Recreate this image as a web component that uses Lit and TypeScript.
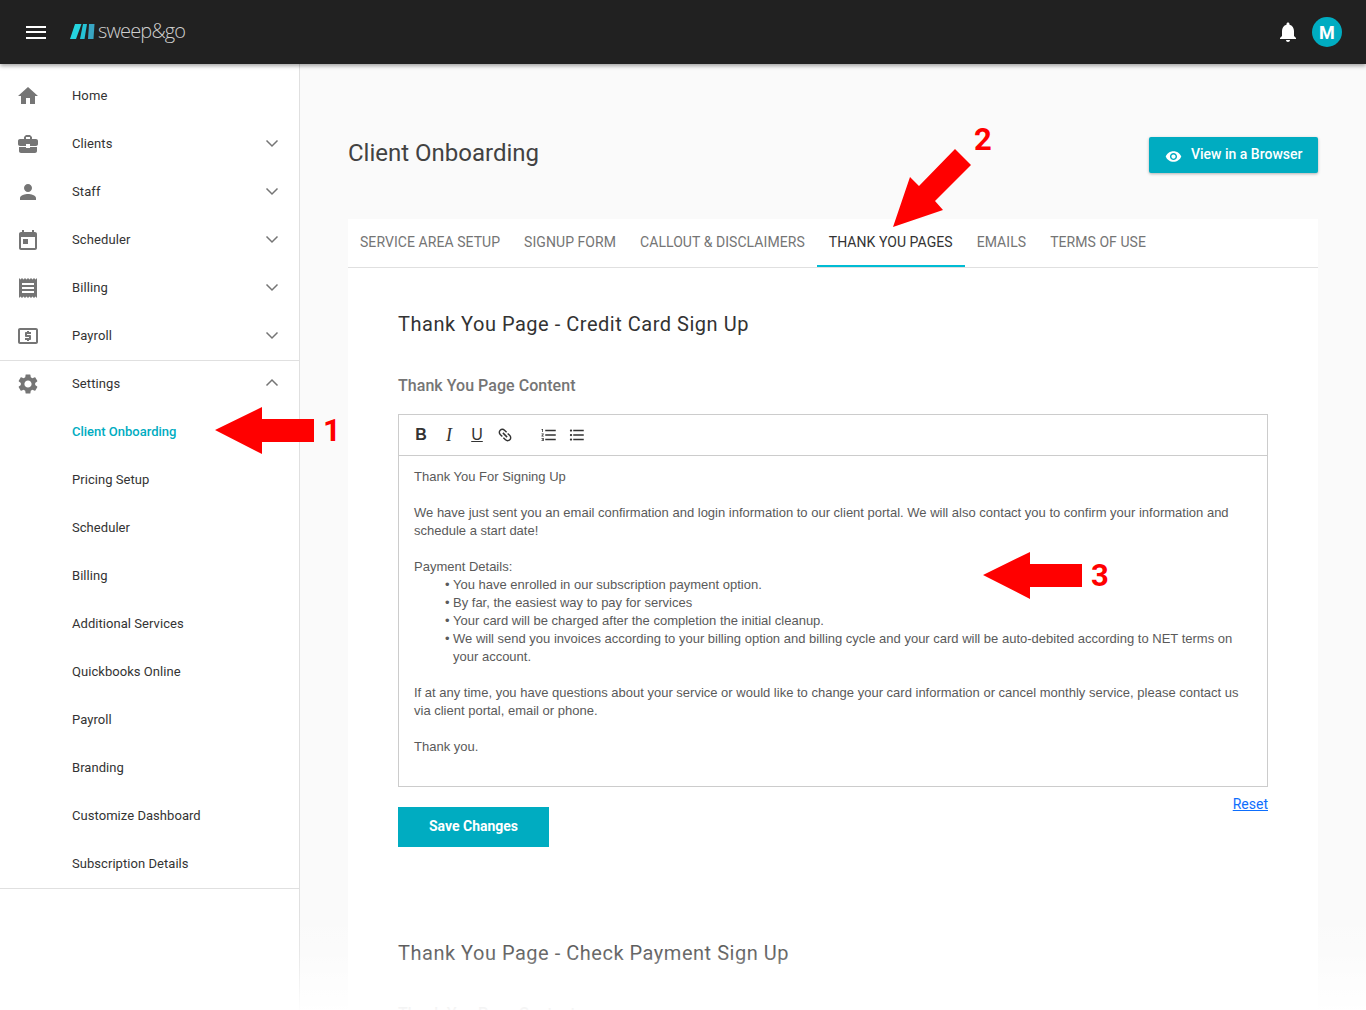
import { LitElement, html, css, svg } from "lit";
import { customElement } from "lit/decorators.js";

const ICONS: Record<string, any> = {
  home: svg`<path d="M10 20v-6h4v6h5v-8h3L12 3 2 12h3v8z"/>`,
  clients: svg`<path d="M10 16v-1H3.01L3 19c0 1.11.89 2 2 2h14c1.11 0 2-.89 2-2v-4h-7v1h-4zm10-9h-4.01V5l-2-2h-4l-2 2v2H4c-1.1 0-2 .9-2 2v3c0 1.11.89 2 2 2h6v-2h4v2h6c1.1 0 2-.9 2-2V9c0-1.1-.9-2-2-2zm-6 0h-4V5h4v2z"/>`,
  staff: svg`<path d="M12 12c2.21 0 4-1.79 4-4s-1.79-4-4-4-4 1.79-4 4 1.79 4 4 4zm0 2c-2.67 0-8 1.34-8 4v2h16v-2c0-2.66-5.33-4-8-4z"/>`,
  scheduler: svg`<path d="M19 4h-1V2h-2v2H8V2H6v2H5c-1.11 0-2 .9-2 2v14c0 1.1.89 2 2 2h14c1.1 0 2-.9 2-2V6c0-1.1-.9-2-2-2zm0 16H5V9h14v11zM7 11h5v5H7z"/>`,
  billing: svg`<path d="M18 17H6v-2h12v2zm0-4H6v-2h12v2zm0-4H6V7h12v2zM3 22l1.5-1.5L6 22l1.5-1.5L9 22l1.5-1.5L12 22l1.5-1.5L15 22l1.5-1.5L18 22l1.5-1.5L21 22V2l-1.5 1.5L18 2l-1.5 1.5L15 2l-1.5 1.5L12 2l-1.5 1.5L9 2 7.5 3.5 6 2 4.500 3.500 3 2v20z"/>`,
  payroll: svg`<path d="M20 4H4c-1.110 0-2 .89-2 2v12c0 1.110.89 2 2 2h16c1.110 0 2-.89 2-2V6c0-1.110-.89-2-2-2zm0 14H4V6h16v12zM11 17h2v-1h1c.55 0 1-.45 1-1v-3c0-.55-.45-1-1-1h-3v-1h4V8h-2V7h-2v1h-1c-.55 0-1 .45-1 1v3c0 .55.45 1 1 1h3v1H9v2h2v1z"/>`,
  settings: svg`<path d="M19.14 12.94c.04-.3.06-.61.06-.94 0-.32-.02-.64-.07-.94l2.030-1.580a.49.49 0 0 0 .12-.61l-1.920-3.320a.488.488 0 0 0-.59-.22l-2.390.96c-.5-.38-1.030-.7-1.620-.94l-.36-2.540a.484.484 0 0 0-.48-.41h-3.840c-.24 0-.43.17-.47.41l-.36 2.540c-.59.24-1.130.57-1.620.94l-2.390-.96c-.22-.08-.47 0-.59.22L2.740 8.870c-.12.21-.08.47.12.61l2.030 1.580c-.05.3-.09.63-.09.94s.02.64.07.94l-2.030 1.580a.49.49 0 0 0-.12.61l1.920 3.320c.12.22.37.29.59.22l2.390-.96c.5.38 1.030.7 1.620.94l.36 2.540c.05.24.24.41.48.41h3.840c.24 0 .44-.17.47-.41l.36-2.540c.59-.24 1.130-.56 1.620-.94l2.390.96c.22.08.47 0 .59-.22l1.920-3.320c.12-.22.07-.47-.12-.61l-2.010-1.580zM12 15.600c-1.980 0-3.600-1.620-3.600-3.600s1.620-3.600 3.600-3.600 3.600 1.620 3.600 3.600-1.620 3.600-3.600 3.600z"/>`,
};

const NAV = [
  { k: "home", t: "Home" },
  { k: "clients", t: "Clients", c: "down" },
  { k: "staff", t: "Staff", c: "down" },
  { k: "scheduler", t: "Scheduler", c: "down" },
  { k: "billing", t: "Billing", c: "down" },
  { k: "payroll", t: "Payroll", c: "down" },
];
const SUB = ["Client Onboarding", "Pricing Setup", "Scheduler", "Billing", "Additional Services", "Quickbooks Online", "Payroll", "Branding", "Customize Dashboard", "Subscription Details"];
const TABS = ["Service Area Setup", "Signup Form", "Callout & Disclaimers", "Thank You Pages", "Emails", "Terms of Use"];

@customElement("app-root")
export class AppRoot extends LitElement {
  static styles = css`
    :host { display: block; position: relative; width: 1366px; height: 1010px; overflow: hidden; background: #fafafa; font-family: Roboto, sans-serif; color: #212121; }
    .top { height: 64px; background: #212121; box-shadow: 0 2px 4px rgba(0,0,0,.35); position: relative; z-index: 2; display: flex; align-items: center; padding: 0 24px 0 26px; }
    .burger { width: 20px; height: 13px; display: flex; flex-direction: column; justify-content: space-between; margin-right: 24px; }
    .burger i { display: block; height: 2px; background: #fff; }
    .logo { display: flex; align-items: center; margin-top: -2px; }
    .logotext { font-family: "Open Sans", sans-serif; font-weight: 300; font-size: 20px; letter-spacing: -0.85px; color: #cfcfcf; margin-left: 3px; margin-top: -2px; }
    .spacer { flex: 1; }
    .bell { width: 24px; height: 24px; fill: #fff; margin-right: 12px; margin-top: -1px; }
    .avatar { width: 30px; height: 30px; border-radius: 50%; background: #00acc1; color: #fff; font-weight: 700; font-size: 18px; display: flex; align-items: center; justify-content: center; }
    .body { display: flex; height: 946px; }
    .side { width: 299px; flex: none; background: #fff; border-right: 1px solid #e0e0e0; padding-top: 8px; box-sizing: content-box; }
    .item { height: 48px; display: flex; align-items: center; font-size: 13px; color: #333; padding-left: 16px; padding-right: 15px; letter-spacing: .1px; }
    .item svg.ic { width: 24px; height: 24px; fill: #757575; margin-right: 32px; flex: none; }
    .item .lbl { flex: 1; padding-bottom: 2px; }
    .chev { width: 24px; height: 24px; fill: none; stroke: #757575; stroke-width: 1.5; flex: none; margin-top: -2px; }
    .div { border-top: 1px solid #e0e0e0; height: 0; }
    .settings { margin-top: -1px; }
    .sub { height: 48px; display: flex; align-items: center; padding-left: 72px; padding-bottom: 2px; box-sizing: border-box; font-size: 13px; letter-spacing: .05px; color: #333; }
    .sub.on { color: #00acc1; font-weight: 500; letter-spacing: 0; }
    .main { flex: 1; padding: 0 48px; min-width: 0; }
    .head { height: 155px; display: flex; align-items: flex-start; justify-content: space-between; }
    h1 { margin: 71px 0 0; font-weight: 400; font-size: 24px; line-height: 36px; color: #424242; letter-spacing: 0; }
    .view { margin-top: 73px; width: 169px; height: 36px; box-sizing: border-box; background: #00acc1; color: #fff; border-radius: 2px; box-shadow: 0 1px 3px rgba(0,0,0,.3); display: flex; align-items: center; padding-left: 17px; padding-bottom: 2px; font-size: 14px; font-weight: 500; gap: 9px; }
    .view svg { width: 17px; height: 17px; fill: #fff; margin-top: 4px; margin-left: -1px; }
    .card { background: #fff; height: 791px; }
    .tabs { display: flex; height: 48px; border-bottom: 1px solid #e0e0e0; }
    .tab { padding: 0 12px 2px; height: 48px; display: flex; align-items: center; font-size: 14px; text-transform: uppercase; color: #757575; box-sizing: border-box; letter-spacing: .06px; }
    .tab.on { color: #333; border-bottom: 2px solid #00bcd4; padding-bottom: 0; }
    .content { padding: 0 50px; }
    h2 { margin: 0; font-weight: 400; font-size: 20px; letter-spacing: .52px; line-height: 28px; color: #333; padding-top: 42px; }
    h3 { margin: 0; font-weight: 500; font-size: 16px; line-height: 24px; color: #757575; padding-top: 36px; padding-bottom: 16px; letter-spacing: .04px; }
    .editor { border: 1px solid #ccc; height: 373px; box-sizing: border-box; }
    .tools { height: 40px; border-bottom: 1px solid #ccc; display: flex; align-items: center; padding-left: 13px; }
    .tools .t { width: 18px; height: 18px; margin-right: 10px; display: flex; align-items: center; justify-content: center; font-size: 16px; font-family: "Liberation Sans", sans-serif; color: #333; }
    .tools svg { width: 18px; height: 18px; fill: #333; }
    .txt { padding: 12px 15px 0; font-family: "Liberation Sans", Arial, sans-serif; font-size: 13px; line-height: 18px; color: #5a5a5a; font-weight: 400; }
    .txt p { margin: 0 0 18px; }
    .txt ul { margin: 0; padding: 0 0 0 39px; list-style: none; }
    .txt li { position: relative; }
    .txt li::before { content: "•"; position: absolute; left: -8px; }
    .actions { display: flex; justify-content: space-between; align-items: flex-start; padding-top: 8px; }
    .reset { color: #0d6efd; text-decoration: underline; font-size: 14px; line-height: 18px; }
    .save { margin-top: 12px; width: 151px; height: 40px; padding-bottom: 2px; box-sizing: border-box; background: #00acc1; color: #fff; font-weight: 700; font-size: 14px; letter-spacing: 0; display: flex; align-items: center; justify-content: center; }
    .h2b { padding-top: 92px; }
    .h3b { padding-top: 35px; }
    .fade { position: absolute; left: 0; right: 0; bottom: 0; height: 100px; background: linear-gradient(to bottom, rgba(255,255,255,0) 0%, rgba(255,255,255,.25) 43%, rgba(255,255,255,.95) 100%); z-index: 3; pointer-events: none; }
    .ann { position: absolute; color: #f00; font-family: Roboto, sans-serif; font-weight: 700; font-size: 31px; line-height: 36px; z-index: 4; }
    .arrow { position: absolute; left: 0; top: 0; z-index: 4; pointer-events: none; }
  `;

  private chev(d: string) {
    return html`<svg class="chev" viewBox="0 0 24 24"><path d="${d === "down" ? "M6.500 9.500 12 15l5.500-5.500" : "M6.500 14.500 12 9l5.500 5.500"}"/></svg>`;
  }

  render() {
    return html`
      <div class="top">
        <div class="burger"><i></i><i></i><i></i></div>
        <div class="logo">
          <svg width="25" height="17" viewBox="0 0 25 17">
            <path d="M5 1h6.500L6 16H0z" fill="#25d4de"/>
            <path d="M13 1h4l-2.500 15H10z" fill="#25c3d6"/>
            <path d="M19 1h5.500l-1 15H18z" fill="#38a6c4"/>
          </svg>
          <span class="logotext">sweep&amp;go</span>
        </div>
        <div class="spacer"></div>
        <svg class="bell" viewBox="0 0 24 24"><path d="M12 22c1.100 0 2-.9 2-2h-4c0 1.100.9 2 2 2zm6-6v-5c0-3.070-1.630-5.640-4.500-6.320V4c0-.83-.67-1.500-1.500-1.500s-1.500.67-1.500 1.500v.68C7.640 5.360 6 7.920 6 11v5l-2 2v1h16v-1l-2-2z"/></svg>
        <div class="avatar">M</div>
      </div>
      <div class="body">
        <nav class="side">
          ${NAV.map((n) => html`<div class="item"><svg class="ic" viewBox="0 0 24 24">${ICONS[n.k]}</svg><span class="lbl">${n.t}</span>${n.c ? this.chev(n.c) : ""}</div>`)}
          <div class="div"></div>
          <div class="item settings"><svg class="ic" viewBox="0 0 24 24">${ICONS.settings}</svg><span class="lbl">Settings</span>${this.chev("up")}</div>
          ${SUB.map((s, i) => html`<div class="sub ${i === 0 ? "on" : ""}">${s}</div>`)}
          <div class="div"></div>
        </nav>
        <main class="main">
          <div class="head">
            <h1>Client Onboarding</h1>
            <div class="view">
              <svg viewBox="0 0 24 24"><path d="M12 4.500C7 4.500 2.730 7.610 1 12c1.730 4.390 6 7.500 11 7.500s9.270-3.110 11-7.500c-1.730-4.390-6-7.500-11-7.500zM12 17c-2.760 0-5-2.240-5-5s2.240-5 5-5 5 2.240 5 5-2.240 5-5 5zm0-8c-1.660 0-3 1.340-3 3s1.340 3 3 3 3-1.340 3-3-1.340-3-3-3z"/></svg>
              View in a Browser
            </div>
          </div>
          <div class="card">
            <div class="tabs">${TABS.map((t, i) => html`<div class="tab ${i === 3 ? "on" : ""}">${t}</div>`)}</div>
            <div class="content">
              <h2>Thank You Page - Credit Card Sign Up</h2>
              <h3>Thank You Page Content</h3>
              <div class="editor">
                <div class="tools">
                  <span class="t" style="font-weight:700">B</span>
                  <span class="t" style="font-style:italic;font-family:'Liberation Serif',serif;font-size:18px">I</span>
                  <span class="t" style="text-decoration:underline">U</span>
                  <span class="t" style="margin-right:26px"><svg viewBox="0 0 24 24"><path d="M3.900 12c0-1.710 1.390-3.100 3.100-3.100h4V7H7c-2.760 0-5 2.240-5 5s2.240 5 5 5h4v-1.900H7c-1.710 0-3.100-1.390-3.100-3.100zM8 13h8v-2H8v2zm9-6h-4v1.900h4c1.710 0 3.100 1.390 3.100 3.100s-1.390 3.100-3.100 3.100h-4V17h4c2.760 0 5-2.240 5-5s-2.240-5-5-5z" transform="rotate(45 12 12)"/></svg></span>
                  <span class="t"><svg viewBox="0 0 24 24"><path d="M2 17h2v.5H3v1h1v.5H2v1h3v-4H2v1zm1-9h1V4H2v1h1v3zm-1 3h1.800L2 13.100v.9h3v-1H3.200L5 10.900V10H2v1zm5-6v2h14V5H7zm0 14h14v-2H7v2zm0-6h14v-2H7v2z"/></svg></span>
                  <span class="t"><svg viewBox="0 0 24 24"><path d="M4 10.500c-.83 0-1.500.67-1.500 1.500s.67 1.500 1.500 1.500 1.500-.67 1.500-1.500-.67-1.500-1.500-1.500zm0-6c-.83 0-1.500.67-1.500 1.500S3.170 7.500 4 7.500 5.500 6.830 5.500 6 4.830 4.500 4 4.500zm0 12c-.83 0-1.500.68-1.500 1.500s.68 1.500 1.500 1.500 1.500-.68 1.500-1.500-.67-1.500-1.500-1.500zM7 19h14v-2H7v2zm0-6h14v-2H7v2zm0-8v2h14V5H7z"/></svg></span>
                </div>
                <div class="txt">
                  <p>Thank You For Signing Up</p>
                  <p>We have just sent you an email confirmation and login information to our client portal. We will also contact you to confirm your information and schedule a start date!</p>
                  <div>Payment Details:</div>
                  <ul>
                    <li>You have enrolled in our subscription payment option.</li>
                    <li>By far, the easiest way to pay for services</li>
                    <li>Your card will be charged after the completion the initial cleanup.</li>
                    <li>We will send you invoices according to your billing option and billing cycle and your card will be auto-debited according to NET terms on your account.</li>
                  </ul>
                  <p style="margin-top:18px">If at any time, you have questions about your service or would like to change your card information or cancel monthly service, please contact us via client portal, email or phone.</p>
                  <p>Thank you.</p>
                </div>
              </div>
              <div class="actions">
                <div class="save">Save Changes</div>
                <span class="reset">Reset</span>
              </div>
              <h2 class="h2b">Thank You Page - Check Payment Sign Up</h2>
              <h3 class="h3b">Thank You Page Content</h3>
            </div>
          </div>
        </main>
      </div>
      <div class="fade"></div>
      <svg class="arrow" width="1366" height="1010" viewBox="0 0 1366 1010" fill="#f00">
        <polygon points="215,430 262,407 262,419 314,419 314,442 262,442 262,454"/>
        <polygon points="893,227 910,177 919,186 955,149 971,165 935,201 943,210"/>
        <polygon points="983,575 1030,552 1030,564 1082,564 1082,587 1030,587 1030,599"/>
      </svg>
      <div class="ann" style="left:323px;top:413px">1</div>
      <div class="ann" style="left:974px;top:122px">2</div>
      <div class="ann" style="left:1091px;top:558px">3</div>
    `;
  }
}
